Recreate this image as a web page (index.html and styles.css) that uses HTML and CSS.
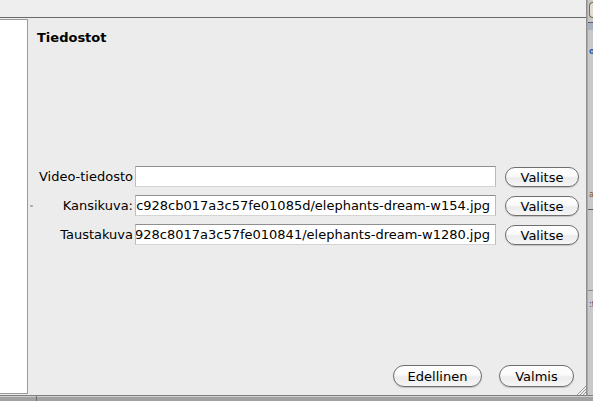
FILE: index.html
```html
<!DOCTYPE html>
<html lang="fi">
<head>
<meta charset="utf-8">
<title>Tiedostot</title>
<link rel="stylesheet" href="styles.css">
</head>
<body>
<div class="screen">
  <div class="top-row">
    <div class="dialog">
      <div class="titlebar"></div>
      <div class="dialog-body">
        <div class="sidebar"></div>
        <div class="content">
          <h1 class="title">Tiedostot</h1>
          <div class="form-area">
            <div class="form">
              <div class="label">Video-tiedosto</div>
              <div class="field"><span class="field-text"></span></div>
              <button class="btn btn-small">Valitse</button>

              <div class="label label-mark">Kansikuva:</div>
              <div class="field"><span class="field-text">0c928cb017a3c57fe01085d/elephants-dream-w154.jpg</span></div>
              <button class="btn btn-small">Valitse</button>

              <div class="label">Taustakuva</div>
              <div class="field"><span class="field-text">c928c8017a3c57fe010841/elephants-dream-w1280.jpg</span></div>
              <button class="btn btn-small">Valitse</button>
            </div>
          </div>
          <div class="footer">
            <button class="btn btn-large btn-prev">Edellinen</button>
            <button class="btn btn-large btn-done">Valmis</button>
          </div>
          <svg class="grip" width="10" height="10" viewBox="0 0 10 10">
            <path d="M1 10 L10 1 M4 10 L10 4 M7 10 L10 7" stroke="#9a9a9a" stroke-width="1" fill="none"/>
          </svg>
        </div>
      </div>
    </div>
    <div class="bg-app-right">
      <div class="bg-pill"></div>
      <div class="bg-gap"></div>
      <div class="bg-line"></div>
      <div class="bg-band"></div>
      <div class="bg-space s1"></div>
      <div class="bg-glyph blue">o</div>
      <div class="bg-space s2"></div>
      <div class="bg-glyph brown">a</div>
      <div class="bg-space s3"></div>
      <div class="bg-line"></div>
      <div class="bg-space s4"></div>
      <div class="bg-line grey"></div>
      <div class="bg-space s5"></div>
      <div class="bg-glyph dots">:f</div>
    </div>
  </div>
  <div class="bg-app-bottom">
    <div class="bottom-cell first"></div>
    <div class="bottom-cell"></div>
  </div>
</div>
</body>
</html>
```

FILE: styles.css
```css
html, body {
  margin: 0;
  padding: 0;
  background: #c9c9c9;
}

.screen {
  width: 593px;
  height: 401px;
  display: flex;
  flex-direction: column;
  overflow: hidden;
  font-family: "DejaVu Sans", "Liberation Sans", sans-serif;
  font-size: 13px;
  color: #000;
}

.top-row {
  display: flex;
  height: 395px;
  flex: none;
}

.dialog {
  width: 586px;
  flex: none;
  border-right: 1px solid #8e8e8e;
  display: flex;
  flex-direction: column;
  background: #ececec;
}

.titlebar {
  height: 17px;
  background: #eeeeee;
  border-bottom: 1px solid #6b6b6b;
  flex: none;
}

.dialog-body {
  flex: 1;
  display: flex;
  min-height: 0;
}

.sidebar {
  width: 27px;
  margin: 1px 0;
  background: #ffffff;
  border: 1px solid #9a9a9a;
  border-left: none;
  flex: none;
}

.content {
  flex: 1;
  min-width: 0;
  display: flex;
  flex-direction: column;
  padding: 12px 7px 8px 9px;
  position: relative;
  background: #ececec;
}

.title {
  margin: 0;
  font-size: 13px;
  font-weight: bold;
  line-height: 16px;
  height: 16px;
}

.form-area {
  flex: 1;
  display: flex;
  align-items: center;
}

.form {
  display: grid;
  grid-template-columns: 98px 361px 83px;
  grid-auto-rows: 21px;
  row-gap: 8px;
}

.label {
  text-align: right;
  padding-right: 2px;
  line-height: 21px;
  white-space: nowrap;
  position: relative;
}

.label-mark::before {
  content: "";
  position: absolute;
  left: -7px;
  top: 10px;
  width: 3px;
  height: 2px;
  background: #a8a8a8;
  border-radius: 1px;
}

.field {
  background: #ffffff;
  border: 1px solid #bcbcbc;
  border-top-color: #8f8f8f;
  border-bottom-color: #d4d4d4;
  display: flex;
  justify-content: flex-end;
  align-items: center;
  overflow: hidden;
  padding-right: 5px;
  box-sizing: border-box;
}

.field-text {
  white-space: nowrap;
  flex: none;
  line-height: 17px;
}

.btn {
  font-family: "DejaVu Sans", "Liberation Sans", sans-serif;
  font-size: 13px;
  color: #000;
  border: 1px solid #6e6e6e;
  background: linear-gradient(#ffffff 0%, #fafafa 45%, #ececec 55%, #f6f6f6 100%);
  box-shadow: 0 1px 1px rgba(0, 0, 0, 0.18);
  padding: 0;
  margin: 0;
  box-sizing: border-box;
  cursor: default;
}

.btn-small {
  width: 74px;
  height: 20px;
  border-radius: 10px;
  margin-left: 9px;
  margin-top: 1px;
  line-height: 17px;
}

.footer {
  display: flex;
  justify-content: flex-end;
  gap: 17px;
  height: 22px;
  padding-right: 5px;
  flex: none;
}

.btn-large {
  height: 22px;
  border-radius: 11px;
  line-height: 19px;
}

.btn-prev {
  width: 89px;
}

.btn-done {
  width: 75px;
}

.grip {
  position: absolute;
  right: 0;
  bottom: 0;
}

.bg-app-right {
  flex: 1;
  min-width: 0;
  background: #c9c9c9;
  border-left: 1px solid #a9a9a9;
  display: flex;
  flex-direction: column;
  overflow: hidden;
}

.bg-pill {
  height: 14px;
  margin: 2px 0 0 1px;
  border: 1px solid #7a6a48;
  border-right: none;
  border-radius: 5px 0 0 5px;
  background: #e2ddd0;
  flex: none;
}

.bg-gap {
  height: 4px;
  flex: none;
}

.bg-line {
  height: 1px;
  background: #5e5e5e;
  flex: none;
}

.bg-line.grey {
  background: #8a8a8a;
}

.bg-band {
  height: 7px;
  background: #a9b3bd;
  flex: none;
}

.bg-space {
  flex: none;
}

.s1 { height: 18px; }
.s2 { height: 135px; }
.s3 { height: 10px; }
.s4 { height: 80px; }
.s5 { height: 10px; }

.bg-glyph {
  height: 8px;
  font-size: 8px;
  line-height: 8px;
  padding-left: 1px;
  white-space: nowrap;
  flex: none;
}

.bg-glyph.blue { color: #1b5fb0; font-weight: bold; }
.bg-glyph.brown { color: #7a5a30; }
.bg-glyph.dots { color: #2a3a6a; }

.bg-app-bottom {
  flex: 1;
  display: flex;
  background: #a2a2a2;
  border-top: 1px solid #7f7f7f;
  box-shadow: inset 0 1px 0 #cfcfcf;
}

.bottom-cell.first {
  width: 36px;
  border-right: 1px solid #6f6f6f;
}
```
